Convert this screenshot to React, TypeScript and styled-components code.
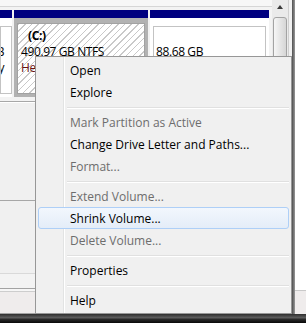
import styled, { createGlobalStyle } from 'styled-components';

const GlobalStyle = createGlobalStyle`
  html, body {
    margin: 0;
    padding: 0;
  }
  body {
    width: 306px;
    height: 323px;
    overflow: hidden;
    background: #fff;
    font-family: 'Open Sans', 'Noto Sans', sans-serif;
    font-size: 12px;
    color: #000;
  }
`;

const Screen = styled.div`
  position: relative;
  width: 306px;
  height: 323px;
  display: flex;
  flex-direction: column;
  overflow: hidden;
`;

const Desktop = styled.div`
  height: 314px;
  display: flex;
`;

const Window = styled.div`
  width: 292px;
  display: flex;
  flex-direction: column;
  background: #f0f0f0;
  border-bottom: 1px solid #a3a3a3;
`;

const WindowEdge = styled.div`
  width: 3px;
  background: linear-gradient(to right, #4f4f4f, #7a7a7a 60%, #9a9a9a);
`;

const Outside = styled.div`
  flex: 1;
  display: flex;
  flex-direction: column;
`;

const OutsideBlank = styled.div`
  height: 290px;
  background: #fff;
  border-bottom: 1px solid #c9c9c9;
`;

const OutsideBar = styled.div`
  flex: 1;
  background: #efecec;
`;

const Taskbar = styled.div`
  flex: 1;
  background: linear-gradient(to bottom, #2e2e2e 0, #5c5c5c 40%, #262626 62%, #080808 100%);
`;

/* upper (graphical) pane */

const UpperPane = styled.div`
  height: 101px;
  display: flex;
  border-bottom: 1px solid #a7a7a7;
`;

const DiskView = styled.div`
  width: 272px;
  display: flex;
  flex-direction: column;
  background: #f3f3f3;
`;

const TopStrip = styled.div`
  height: 6px;
  background: #f7f7f7;
  border-bottom: 1px solid #d6d6d6;
`;

const PartitionRow = styled.div`
  display: flex;
  gap: 2px;
  padding-top: 3px;
`;

const Partition = styled.div<{ $width: number }>`
  width: ${p => p.$width}px;
  display: flex;
  flex-direction: column;
`;

const PartitionHeader = styled.div`
  height: 8px;
  background: #000080;
`;

const PartitionBody = styled.div<{ $selected?: boolean; $pad: string }>`
  height: 79px;
  box-sizing: border-box;
  padding: ${p => p.$pad};
  background: ${p => (p.$selected ? '#b2b2b2' : '#fff')};
  display: flex;
`;

const PartitionFace = styled.div<{ $selected?: boolean; $pad: string }>`
  flex: 1;
  min-width: 0;
  overflow: hidden;
  padding: ${p => p.$pad};
  border: 1px solid ${p => (p.$selected ? '#a2a2a2' : '#c3c3c3')};
  background: ${p =>
    p.$selected
      ? 'repeating-linear-gradient(135deg, #c9c9c9 0 1px, #fff 1px 4.7px)'
      : '#fff'};
`;

const FaceLine = styled.div<{ $bold?: boolean; $tone?: string; $indent?: number; $end?: boolean }>`
  height: 16px;
  line-height: 16px;
  white-space: nowrap;
  letter-spacing: -0.4px;
  display: flex;
  justify-content: ${p => (p.$end ? 'flex-end' : 'flex-start')};
  padding-left: ${p => p.$indent ?? 0}px;
  font-weight: ${p => (p.$bold ? 700 : 400)};
  color: ${p => p.$tone ?? '#000'};
`;

const Scrollbar = styled.div`
  width: 17px;
  margin-right: 3px;
  display: flex;
  flex-direction: column;
  background: #eaeaea;
  border-right: 1px solid #cfcfcf;
  box-sizing: border-box;
`;

const ScrollButton = styled.div`
  height: 17px;
  display: flex;
  align-items: center;
  justify-content: center;
  padding-bottom: 3px;
  box-sizing: border-box;
`;

const UpArrow = styled.div`
  width: 0;
  height: 0;
  border-left: 3.5px solid transparent;
  border-right: 3.5px solid transparent;
  border-bottom: 4px solid #3a3a3a;
`;

const Thumb = styled.div`
  height: 70px;
  margin: 0 1px;
  border: 1px solid #a3a3a3;
  border-radius: 3px;
  background: linear-gradient(to right, #f6f6f6, #e4e4e4 55%, #d6d6d6);
`;

/* lower (list) pane, mostly hidden behind the menu */

const LowerPane = styled.div`
  flex: 1;
  display: flex;
  flex-direction: column;
  border-top: 1px solid #fff;
`;

const PaneBand = styled.div<{ $height: number; $line: string; $bg?: string }>`
  height: ${p => p.$height}px;
  background: ${p => p.$bg ?? '#f0f0f0'};
  border-bottom: 1px solid ${p => p.$line};
`;

const StatusBar = styled.div`
  flex: 1;
  background: #efecec;
`;

/* context menu */

const Menu = styled.div`
  position: absolute;
  left: 35px;
  top: 56px;
  width: 257px;
  box-sizing: border-box;
  padding: 2px;
  background:
    linear-gradient(to right, transparent 27px, #e2e3e3 27px 28px, #fff 28px 29px, transparent 29px),
    #f0f0f0;
  border: 1px solid #979797;
  display: flex;
  flex-direction: column;
`;

const MenuItem = styled.div<{ $disabled?: boolean; $hot?: boolean }>`
  height: 22px;
  box-sizing: border-box;
  padding-left: 31px;
  display: flex;
  align-items: center;
  white-space: nowrap;
  border: 1px solid ${p => (p.$hot ? '#aecff7' : 'transparent')};
  border-radius: 3px;
  background: ${p => (p.$hot ? 'linear-gradient(to bottom, #f2f7fd, #e4edf8)' : 'transparent')};
  color: ${p => (p.$disabled ? '#6d6d6d' : '#000')};
`;

const MenuSeparator = styled.div`
  height: 2px;
  box-sizing: border-box;
  margin: 4px 0 2px 29px;
  border-top: 1px solid #e0e0e0;
  border-bottom: 1px solid #fff;
`;

type Entry = { label: string; disabled?: boolean; hot?: boolean } | 'sep';

const entries: Entry[] = [
  { label: 'Open' },
  { label: 'Explore' },
  'sep',
  { label: 'Mark Partition as Active', disabled: true },
  { label: 'Change Drive Letter and Paths...' },
  { label: 'Format...', disabled: true },
  'sep',
  { label: 'Extend Volume...', disabled: true },
  { label: 'Shrink Volume...', hot: true },
  { label: 'Delete Volume...', disabled: true },
  'sep',
  { label: 'Properties' },
  'sep',
  { label: 'Help' },
];

const App = () => (
  <Screen>
    <GlobalStyle />
    <Desktop>
      <Window>
        <UpperPane>
          <DiskView>
            <TopStrip />
            <PartitionRow>
              <Partition $width={12}>
                <PartitionHeader />
                <PartitionBody $pad="8px 0 3px 0">
                  <PartitionFace $pad="1px 7px 0 0">
                    <FaceLine $end />
                    <FaceLine $end>
                      <span>9.77 GB</span>
                    </FaceLine>
                    <FaceLine $end>
                      <span>Healthy</span>
                    </FaceLine>
                  </PartitionFace>
                </PartitionBody>
              </Partition>
              <Partition $width={134}>
                <PartitionHeader />
                <PartitionBody $selected $pad="5px 3px 3px 3px">
                  <PartitionFace $selected $pad="4px 0 0 3px">
                    <FaceLine $bold $indent={7}>(C:)</FaceLine>
                    <FaceLine>490.97 GB NTFS</FaceLine>
                    <FaceLine $tone="#6a1212">Healthy</FaceLine>
                  </PartitionFace>
                </PartitionBody>
              </Partition>
              <Partition $width={119}>
                <PartitionHeader />
                <PartitionBody $pad="8px 3px 3px 3px">
                  <PartitionFace $pad="1px 0 0 2px">
                    <FaceLine />
                    <FaceLine>88.68 GB</FaceLine>
                  </PartitionFace>
                </PartitionBody>
              </Partition>
            </PartitionRow>
          </DiskView>
          <Scrollbar>
            <ScrollButton>
              <UpArrow />
            </ScrollButton>
            <Thumb />
          </Scrollbar>
        </UpperPane>
        <LowerPane>
          <PaneBand $height={97} $line="#a7a7a7" />
          <PaneBand $height={72} $line="#d9d9d9" />
          <PaneBand $height={14} $line="#a3a3a3" $bg="#f3f3f3" />
          <PaneBand $height={2} $line="#cdcdcd" $bg="#f6f6f6" />
          <StatusBar />
        </LowerPane>
      </Window>
      <WindowEdge />
      <Outside>
        <OutsideBlank />
        <OutsideBar />
      </Outside>
    </Desktop>
    <Taskbar />

    <Menu>
      {entries.map((e, i) =>
        e === 'sep' ? (
          <MenuSeparator key={i} />
        ) : (
          <MenuItem key={i} $disabled={e.disabled} $hot={e.hot}>
            {e.label}
          </MenuItem>
        )
      )}
    </Menu>
  </Screen>
);

export default App;
